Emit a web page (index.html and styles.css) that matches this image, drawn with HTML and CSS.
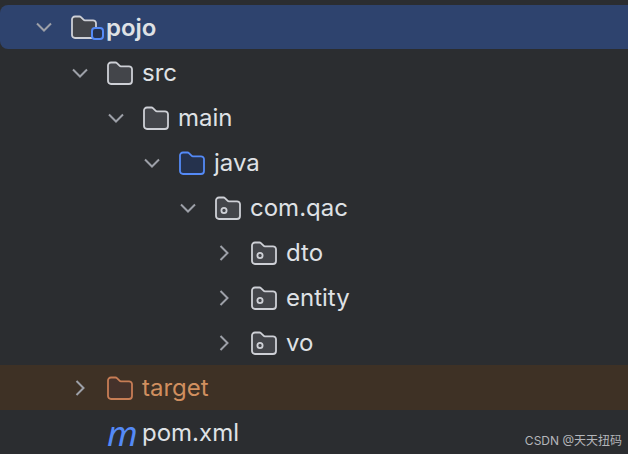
FILE: index.html
```html
<!DOCTYPE html>
<html lang="en">
<head>
  <meta charset="UTF-8" />
  <title>Project</title>
  <link rel="stylesheet" href="styles.css">
</head>
<body>

<svg class="defs" width="0" height="0">
  <symbol id="folder" viewBox="0 0 26 24">
    <path d="M1 4.5a3 3 0 0 1 3-3h4.5a2 2 0 0 1 1.4.6l2.6 2.6a2 2 0 0 0 1.4.6H22a3 3 0 0 1 3 3V20a3 3 0 0 1-3 3H4a3 3 0 0 1-3-3z"/>
  </symbol>
  <symbol id="package" viewBox="0 0 26 24">
    <path d="M1 4.5a3 3 0 0 1 3-3h4.5a2 2 0 0 1 1.4.6l2.6 2.6a2 2 0 0 0 1.4.6H22a3 3 0 0 1 3 3V20a3 3 0 0 1-3 3H4a3 3 0 0 1-3-3z"/>
    <circle cx="9" cy="14.5" r="2.6" fill="none"/>
  </symbol>
  <symbol id="down" viewBox="0 0 18 18"><path d="M2 5.5l7 7 7-7" fill="none"/></symbol>
  <symbol id="right" viewBox="0 0 18 18"><path d="M5.5 2l7 7-7 7" fill="none"/></symbol>
</svg>

<ul class="tree">
  <li class="row selected">
    <svg class="chevron"><use href="#down"/></svg>
    <span class="icon-wrap">
      <svg class="icon"><use href="#folder"/></svg>
      <span class="module-badge"></span>
    </span>
    <span class="name strong">pojo</span>
  </li>
  <li class="row depth-1">
    <svg class="chevron"><use href="#down"/></svg>
    <svg class="icon"><use href="#folder"/></svg>
    <span class="name">src</span>
  </li>
  <li class="row depth-2">
    <svg class="chevron"><use href="#down"/></svg>
    <svg class="icon"><use href="#folder"/></svg>
    <span class="name">main</span>
  </li>
  <li class="row depth-3">
    <svg class="chevron"><use href="#down"/></svg>
    <svg class="icon blue"><use href="#folder"/></svg>
    <span class="name">java</span>
  </li>
  <li class="row depth-4">
    <svg class="chevron"><use href="#down"/></svg>
    <svg class="icon"><use href="#package"/></svg>
    <span class="name">com.qac</span>
  </li>
  <li class="row depth-5">
    <svg class="chevron"><use href="#right"/></svg>
    <svg class="icon"><use href="#package"/></svg>
    <span class="name">dto</span>
  </li>
  <li class="row depth-5">
    <svg class="chevron"><use href="#right"/></svg>
    <svg class="icon"><use href="#package"/></svg>
    <span class="name">entity</span>
  </li>
  <li class="row depth-5">
    <svg class="chevron"><use href="#right"/></svg>
    <svg class="icon"><use href="#package"/></svg>
    <span class="name">vo</span>
  </li>
  <li class="row depth-1 excluded">
    <svg class="chevron"><use href="#right"/></svg>
    <svg class="icon orange"><use href="#folder"/></svg>
    <span class="name">target</span>
  </li>
  <li class="row depth-1">
    <span class="chevron"></span>
    <span class="icon maven">m</span>
    <span class="name">pom.xml</span>
  </li>
</ul>

<div class="watermark">CSDN @天天扭码</div>

</body>
</html>
```

FILE: styles.css
```css
html, body { margin: 0; height: 100%; overflow: hidden; }
body { background: #2b2d30; font-family: Inter, "Noto Sans CJK SC", sans-serif; color: #dfe1e5; }
.defs { display: block; height: 0; }
.tree { list-style: none; margin: 0; padding: 5px 0 0; }
.row { display: flex; align-items: center; height: 45px; padding-left: 35px; }
.depth-1 { padding-left: 71px; }
.depth-2 { padding-left: 107px; }
.depth-3 { padding-left: 143px; }
.depth-4 { padding-left: 179px; }
.depth-5 { padding-left: 215px; }
.selected { height: 44px; margin-bottom: 1px; background: #2e436e; border-radius: 8px 0 0 8px; }
.excluded { background: #3e3125; }
.excluded .name { color: #d08f5f; }
.chevron { width: 18px; height: 18px; margin-right: 18px; flex: none; fill: none; stroke: #9da0a8; stroke-width: 2; }
.icon { width: 26px; height: 24px; margin-right: 9px; flex: none; fill: #43454a; stroke: #ced0d6; stroke-width: 1.8; }
.icon.blue { fill: #25324d; stroke: #548af7; }
.icon.orange { fill: #45322b; stroke: #c77d55; }
.icon-wrap { position: relative; display: flex; margin-right: 0; }
.module-badge { position: absolute; right: 2px; bottom: -1px; width: 13px; height: 13px; box-sizing: border-box; background: #25324d; border: 2px solid #548af7; border-radius: 4px; }
.maven { font-size: 35px; font-style: italic; font-family: "Noto Sans", sans-serif; color: #548af7; line-height: 24px; text-align: center; }
.name { font-size: 24px; line-height: 45px; white-space: nowrap; }
.strong { font-weight: 600; }
.watermark { position: absolute; right: 6px; bottom: 5px; font-size: 12px; line-height: 16px; color: #b4b6ba; }
```
